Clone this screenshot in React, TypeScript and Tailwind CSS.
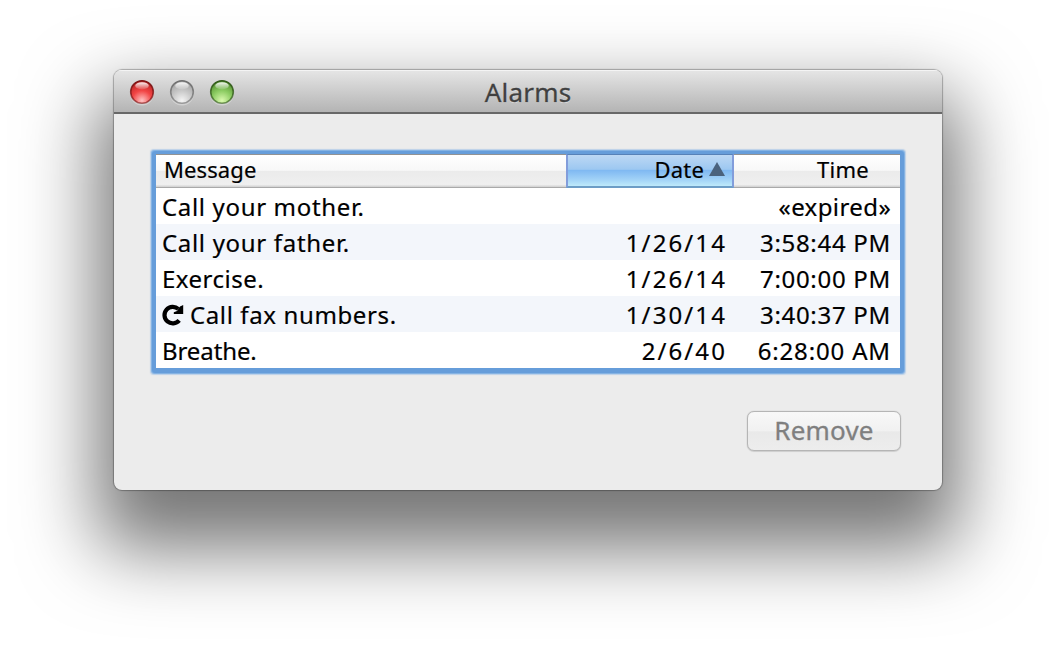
import React from "react";

type Alarm = { message: string; date: string; time: string; repeats?: boolean; msgTrack: string; timeTrack: string };

const alarms: Alarm[] = [
  { message: "Call your mother.", date: "", time: "«expired»", msgTrack: "tracking-[0.66px]", timeTrack: "tracking-[0.4px]" },
  { message: "Call your father.", date: "1/26/14", time: "3:58:44 PM", msgTrack: "tracking-[0.68px]", timeTrack: "tracking-[0.7px]" },
  { message: "Exercise.", date: "1/26/14", time: "7:00:00 PM", msgTrack: "tracking-[0.5px]", timeTrack: "tracking-[0.7px]" },
  { message: "Call fax numbers.", date: "1/30/14", time: "3:40:37 PM", repeats: true, msgTrack: "tracking-[0.62px]", timeTrack: "tracking-[0.7px]" },
  { message: "Breathe.", date: "2/6/40", time: "6:28:00 AM", msgTrack: "tracking-[-0.1px]", timeTrack: "tracking-[0.85px]" },
];

function Light({ id, rim, edge, mid, glow }: { id: string; rim: string; edge: string; mid: string; glow: string }) {
  return (
    <svg width="26" height="28" viewBox="0 0 26 28" className="block">
      <defs>
        <radialGradient id={`${id}-body`} cx="0.5" cy="0.88" r="0.88">
          <stop offset="0" stopColor={glow} />
          <stop offset="0.5" stopColor={mid} />
          <stop offset="1" stopColor={edge} />
        </radialGradient>
        <linearGradient id={`${id}-rim`} x1="0" y1="0" x2="0" y2="1">
          <stop offset="0" stopColor={rim} />
          <stop offset="1" stopColor={rim} stopOpacity="0.6" />
        </linearGradient>
        <linearGradient id={`${id}-shine`} x1="0" y1="0" x2="0" y2="1">
          <stop offset="0" stopColor="#fff" stopOpacity="0.95" />
          <stop offset="1" stopColor="#fff" stopOpacity="0.1" />
        </linearGradient>
      </defs>
      <circle cx="13" cy="14.4" r="12" fill="#fff" fillOpacity="0.3" />
      <circle cx="13" cy="13" r="11.3" fill={`url(#${id}-body)`} stroke={`url(#${id}-rim)`} strokeWidth="1.6" />
      <ellipse cx="13" cy="6.8" rx="6.8" ry="3.6" fill={`url(#${id}-shine)`} />
    </svg>
  );
}

export default function App() {
  return (
    <div className="h-[648px] w-[1056px] overflow-hidden bg-white pl-[114px] pt-[70px] font-['Noto_Sans','Open_Sans',sans-serif] text-black">
      <main className="flex h-[420px] w-[828px] flex-col overflow-hidden rounded-[8px] bg-[#ececec] shadow-[0_0_1px_1px_rgba(0,0,0,0.28),0_42px_76px_17px_rgba(0,0,0,0.54)]">
        <header className="grid h-[44px] shrink-0 grid-cols-[128px_1fr_128px] items-center border-b-2 border-[#686868] bg-linear-to-b from-[#e6e6e6] to-[#b4b4b4] shadow-[inset_0_1px_0_#f4f4f4]">
          <div className="flex gap-[14px] pl-[15px] pt-[3px]">
            <Light id="close" rim="#7c1414" edge="#b52222" mid="#f24545" glow="#ffc4c4" />
            <Light id="min" rim="#707070" edge="#a0a0a0" mid="#c8c8c8" glow="#f4f4f4" />
            <Light id="zoom" rim="#315a19" edge="#4f8a2c" mid="#8ccc62" glow="#dcfab0" />
          </div>
          <h1 className="pt-[2px] text-center text-[26px] leading-[36px] tracking-[0.2px] text-[#404040] [-webkit-text-stroke:0.3px_#404040] [text-shadow:0_1px_0_rgba(255,255,255,0.5)]">Alarms</h1>
        </header>
        <section className="px-[42px] pt-[40px]">
          <div className="h-[214px] w-[744px] rounded-[1px] bg-white shadow-[0_1px_0_4px_#669dda,0_1px_1px_5px_#7fb0e3,0_1px_1px_6px_rgba(138,181,228,0.4)]">
            <div className="grid h-[34px] grid-cols-[410px_168px_166px] border-b border-t border-b-[#a9a9a9] border-t-[#929292] bg-[linear-gradient(#fff_0%,#f8f8f8_48%,#ebebeb_50%,#efefef_92%,#cfcfcf_100%)] text-[22px] leading-[28px] [-webkit-text-stroke:0.2px_#000]">
              <div className="pl-[8px] tracking-[0.1px]">Message</div>
              <div className="-my-px flex items-start justify-end gap-[5px] border-x-2 border-b-2 border-t border-x-[#829ddb] border-b-[#6d9dc6] border-t-[#5782b8] bg-[linear-gradient(#bdd8f4_0%,#9dc8f1_46%,#80b9f2_50%,#a0d1f7_78%,#bfeafa_100%)] pr-[7px]">
                <span className="tracking-[0.2px]">Date</span>
                <svg width="16" height="14" viewBox="0 0 16 14" className="mt-[7px]"><path d="M8 0 16 14H0Z" fill="#4a627d" /></svg>
              </div>
              <div className="pr-[31px] text-right tracking-[0.3px]">Time</div>
            </div>
            {alarms.map((a, i) => (
              <div key={i} className={`grid h-[36px] grid-cols-[410px_168px_166px] text-[24px] leading-[38px] [-webkit-text-stroke:0.2px_#000] ${i % 2 ? "bg-[#f3f6fb]" : "bg-white"}`}>
                <div className={`flex items-center gap-[6px] pl-[6px] ${a.msgTrack}`}>
                  {a.repeats && (
                    <svg width="22" height="22" viewBox="0 0 22 22" className="shrink-0">
                      <path d="M17.2 16.4A8.3 8.3 0 1 1 16.4 5" fill="none" stroke="#000" strokeWidth="4.2" />
                      <path d="M21.2 1V10H11.8V8.2L15 7 18 2.6Z" fill="#000" />
                    </svg>
                  )}
                  <span>{a.message}</span>
                </div>
                <div className="pr-[7px] text-right tracking-[2.1px]">{a.date}</div>
                <div className={`pr-[9px] text-right ${a.timeTrack}`}>{a.time}</div>
              </div>
            ))}
          </div>
          <div className="-mr-px flex justify-end pt-[43px]">
            <button className="h-[40px] w-[154px] rounded-[7px] border border-[#b5b5b5] bg-[linear-gradient(#f8f8f8,#f1f1f1_50%,#e9e9e9_52%,#ededed)] pb-[2px] text-[26px] leading-[36px] tracking-[0.2px] text-[#7f7f7f] shadow-[0_0_1px_rgba(0,0,0,0.3),0_1px_1px_rgba(0,0,0,0.1)] [-webkit-text-stroke:0.3px_#7f7f7f]">Remove</button>
          </div>
        </section>
      </main>
    </div>
  );
}
